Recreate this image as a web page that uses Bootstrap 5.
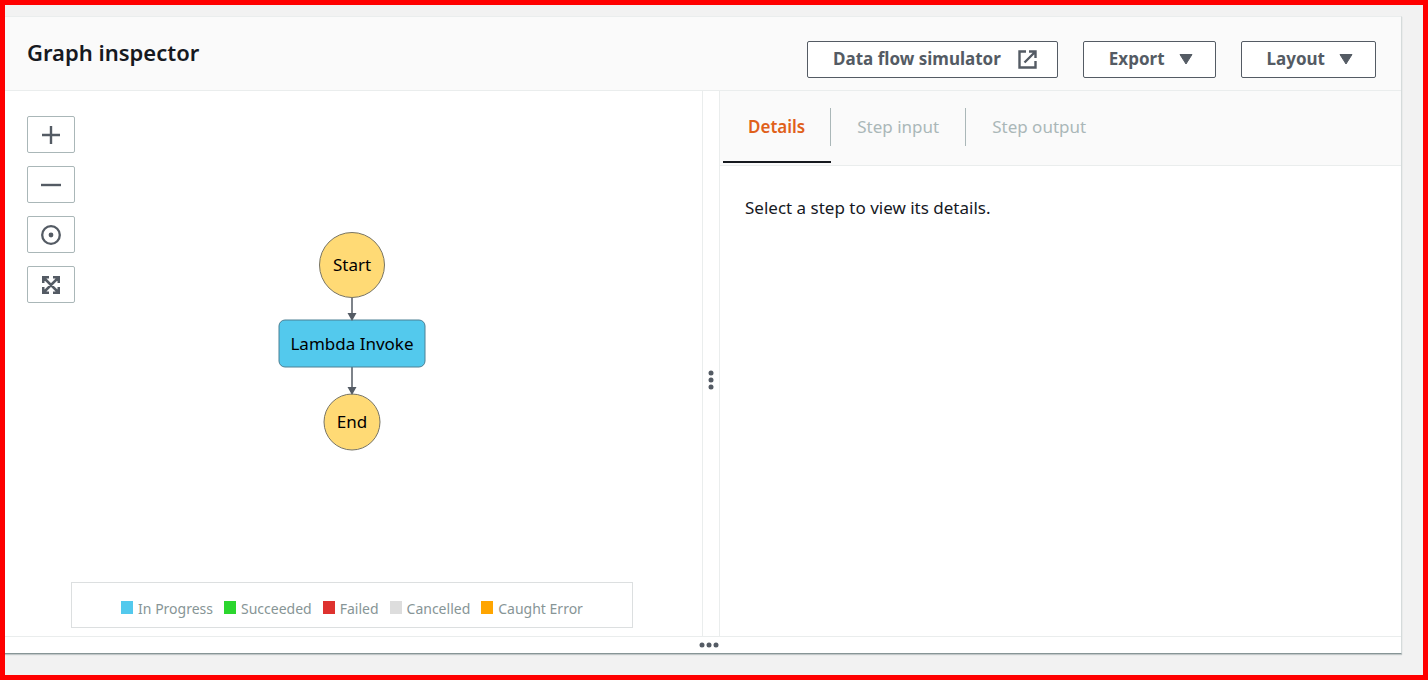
<!DOCTYPE html>
<html lang="en">
<head>
<meta charset="utf-8">
<meta name="viewport" content="width=device-width, initial-scale=1">
<title>Graph inspector</title>
<link rel="stylesheet" href="https://cdn.jsdelivr.net/npm/bootstrap@5.3.0/dist/css/bootstrap.min.css">
<style>
body { font-family: "Noto Sans", "Open Sans", sans-serif; font-size: 17px; line-height: 24px; color: #16191f; background: #f2f2f2; }
.page-frame { border: 5px solid #f00; padding: 11px 21px 21px 0; }
.inspector { background: #fff; border-top: 1px solid #eaeded; border-right: 1px solid #d5dbdb; border-bottom: 1px solid #879596; box-shadow: 0 1px 1px rgba(0, 28, 36, .2); }
.inspector-head { background: #fafafa; border-bottom: 1px solid #eaeded; min-height: 74px; padding: 0 25px 0 22px; }
.inspector-head h2 { font-size: 22px; line-height: 28px; font-weight: 600; }
.head-actions { gap: 25px; padding-top: 11px; }
.btn-console { --bs-btn-color: #545b64; --bs-btn-border-color: #545b64; --bs-btn-bg: #fff; --bs-btn-hover-color: #16191f; --bs-btn-hover-bg: #fafafa; --bs-btn-hover-border-color: #16191f; --bs-btn-font-size: 17px; --bs-btn-font-weight: 700; --bs-btn-line-height: 24px; --bs-btn-border-radius: 2px; --bs-btn-padding-x: 25px; --bs-btn-padding-y: 0; height: 37px; }
.btn-link-out { padding-right: 20px; gap: 17px; }
.btn-menu { gap: 14px; padding-right: 22px; }
.btn-tool { --bs-btn-color: #545b64; --bs-btn-border-color: #aab7b8; --bs-btn-bg: #fff; --bs-btn-hover-bg: #fafafa; --bs-btn-hover-border-color: #545b64; --bs-btn-border-radius: 2px; --bs-btn-padding-x: 0; --bs-btn-padding-y: 0; width: 48px; height: 37px; }
.graph-pane { flex: 0 0 50%; min-width: 0; padding: 25px 26px 8px 22px; }
.tool-stack { top: 25px; left: 22px; gap: 13px; }
.graph-area { padding-bottom: 16px; min-height: 320px; }
.state-graph text { font-family: "Noto Sans", "Open Sans", sans-serif; font-size: 17px; text-anchor: middle; fill: #000; }
.legend-box { width: 562px; max-width: 100%; min-height: 46px; border: 1px solid #dcdfe0; gap: 0 11px; padding: 8px 8px 0; color: #879596; font-size: 14px; line-height: 20px; }
.legend-item { gap: 5px; }
.swatch { width: 12px; height: 13px; margin-bottom: 4px; }
.is-progress { background: #53c9ed; }
.is-succeeded { background: #2bd62e; }
.is-failed { background: #de322f; }
.is-cancelled { background: #ddd; }
.is-caught { background: #ffa500; }
.split-bar { width: 18px; margin-left: -1px; border: 1px solid #eaeded; border-width: 0 1px; padding-top: 33px; color: #545b64; cursor: col-resize; }
.detail-pane { flex: 1 1 0; min-width: 0; }
.tab-strip { background: #fafafa; border-bottom: 1px solid #eaeded; padding: 0 3px 2px; --bs-nav-link-color: #aab7b8; --bs-nav-link-disabled-color: #aab7b8; }
.tab-strip .nav-link { height: 72px; padding: 17px 0 0; font-size: 17px; border-bottom: 2px solid transparent; }
.tab-strip .nav-link span { display: block; height: 38px; line-height: 38px; padding: 0 26px; border-right: 1px solid #aab7b8; }
.tab-strip .nav-item:first-child span { padding: 0 25px; }
.tab-strip .nav-item:last-child span { border-right: 0; }
.tab-strip .nav-link.active { color: #e0601a; font-weight: 600; border-bottom-color: #16191f; }
.detail-body { padding: 30px 25px; }
.resize-bar { height: 17px; border-top: 1px solid #eaeded; color: #545b64; padding-left: 12px; cursor: row-resize; }
</style>
<script defer src="https://cdn.jsdelivr.net/npm/bootstrap@5.3.0/dist/js/bootstrap.bundle.min.js"></script>
</head>
<body>
<div class="page-frame min-vh-100 d-flex">
  <main class="inspector flex-grow-1 d-flex flex-column">
    <header class="inspector-head d-flex flex-wrap justify-content-between align-items-center">
      <h2 class="mb-1">Graph inspector</h2>
      <div class="head-actions d-flex flex-wrap">
        <button type="button" class="btn btn-console btn-link-out d-flex align-items-center">Data flow simulator
          <svg width="19" height="19" viewBox="0 0 19 19" fill="none" stroke="currentColor" stroke-width="2.400" aria-hidden="true"><path d="M8 1.500H1.500V17.500H17.500V11M11 1.500H17.500V8M17 2L6.500 12.500"/></svg>
        </button>
        <button type="button" class="btn btn-console btn-menu d-flex align-items-center">Export
          <svg width="14" height="12" viewBox="0 0 14 12" aria-hidden="true"><path d="M1 1.500H13L7 11Z" fill="currentColor" stroke="currentColor" stroke-linejoin="round"/></svg>
        </button>
        <button type="button" class="btn btn-console btn-menu d-flex align-items-center">Layout
          <svg width="14" height="12" viewBox="0 0 14 12" aria-hidden="true"><path d="M1 1.500H13L7 11Z" fill="currentColor" stroke="currentColor" stroke-linejoin="round"/></svg>
        </button>
      </div>
    </header>
    <div class="flex-grow-1 d-flex">
      <section class="graph-pane position-relative d-flex flex-column" aria-label="Graph">
        <div class="tool-stack position-absolute d-flex flex-column">
          <button type="button" class="btn btn-tool d-flex align-items-center justify-content-center" aria-label="Zoom in"><svg width="20" height="20" viewBox="0 0 20 20" stroke="currentColor" stroke-width="2.400"><path d="M1 10H19M10 1V19"/></svg></button>
          <button type="button" class="btn btn-tool d-flex align-items-center justify-content-center" aria-label="Zoom out"><svg width="20" height="20" viewBox="0 0 20 20" stroke="currentColor" stroke-width="2.400"><path d="M0 10H20"/></svg></button>
          <button type="button" class="btn btn-tool d-flex align-items-center justify-content-center" aria-label="Center graph"><svg width="20" height="20" viewBox="0 0 20 20" fill="none" stroke="currentColor" stroke-width="2.300"><circle cx="10" cy="10" r="8.800"/><circle cx="10" cy="10" r="2.400" fill="currentColor" stroke="none"/></svg></button>
          <button type="button" class="btn btn-tool d-flex align-items-center justify-content-center" aria-label="Fit graph"><svg width="20" height="20" viewBox="0 0 20 20" fill="none" stroke="currentColor" stroke-width="2.500"><path d="M2.250 8V2.250H8M12 2.250H17.750V8M17.750 12V17.750H12M8 17.750H2.250V12M2.500 2.500L17.500 17.500M17.500 2.500L2.500 17.500"/></svg></button>
        </div>
        <div class="graph-area flex-grow-1 d-flex align-items-center justify-content-center">
          <svg class="state-graph" width="148" height="219" viewBox="0 0 148 219" role="img" aria-label="Start, Lambda Invoke, End">
            <path d="M74 66V82M74 135V156" stroke="#545b64" stroke-width="1.500"/>
            <g stroke="#777464"><circle cx="74" cy="33" r="32.500" fill="#ffda75"/><rect x="1" y="88" width="146" height="47" rx="6" fill="#53c9ed" stroke="#4c8094"/><circle cx="74" cy="190" r="28" fill="#ffda75"/></g>
            <path d="M69.500 81H78.500L74 89ZM69.500 155H78.500L74 163Z" fill="#545b64"/>
            <text x="74" y="39">Start</text><text x="74" y="118">Lambda Invoke</text><text x="74" y="196">End</text>
          </svg>
        </div>
        <div class="legend-box d-flex flex-wrap align-items-center justify-content-center align-self-center">
          <div class="legend-item d-flex align-items-center"><span class="swatch is-progress"></span>In Progress</div>
          <div class="legend-item d-flex align-items-center"><span class="swatch is-succeeded"></span>Succeeded</div>
          <div class="legend-item d-flex align-items-center"><span class="swatch is-failed"></span>Failed</div>
          <div class="legend-item d-flex align-items-center"><span class="swatch is-cancelled"></span>Cancelled</div>
          <div class="legend-item d-flex align-items-center"><span class="swatch is-caught"></span>Caught Error</div>
        </div>
      </section>
      <div class="split-bar flex-shrink-0 d-flex align-items-center justify-content-center" role="separator" aria-orientation="vertical">
        <svg width="6" height="20" viewBox="0 0 6 20" fill="currentColor"><circle cx="3" cy="3" r="2.500"/><circle cx="3" cy="10" r="2.500"/><circle cx="3" cy="17" r="2.500"/></svg>
      </div>
      <section class="detail-pane" aria-label="Step details">
        <ul class="nav tab-strip">
          <li class="nav-item"><a class="nav-link active" href="#details" aria-current="page"><span>Details</span></a></li>
          <li class="nav-item"><a class="nav-link disabled" href="#input" aria-disabled="true"><span>Step input</span></a></li>
          <li class="nav-item"><a class="nav-link disabled" href="#output" aria-disabled="true"><span>Step output</span></a></li>
        </ul>
        <div class="detail-body" id="details">Select a step to view its details.</div>
      </section>
    </div>
    <div class="resize-bar d-flex align-items-center justify-content-center" role="separator">
      <svg width="20" height="6" viewBox="0 0 20 6" fill="currentColor"><circle cx="3" cy="3" r="2.500"/><circle cx="10" cy="3" r="2.500"/><circle cx="17" cy="3" r="2.500"/></svg>
    </div>
  </main>
</div>
</body>
</html>
